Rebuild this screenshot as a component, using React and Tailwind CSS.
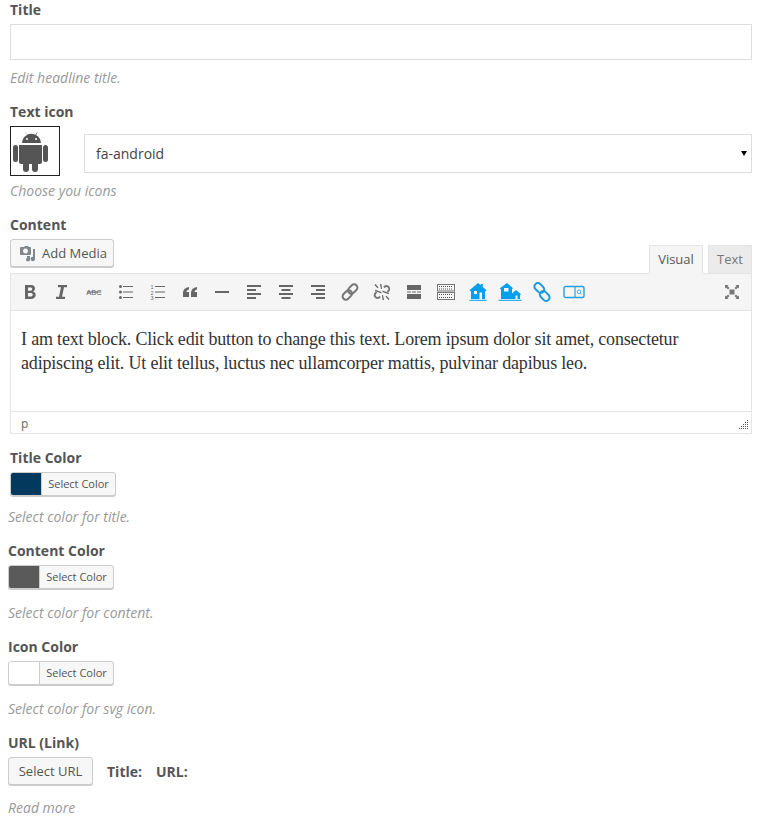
import React from 'react';

const Label = ({ children, className = '' }) => (
    <div className={`text-[14px] leading-[20px] font-bold text-[#555] ${className}`}>{children}</div>
);

const Help = ({ children, className = '' }) => (
    <div className={`text-[14px] leading-[20px] italic text-[#999] ${className}`}>{children}</div>
);

const ColorButton = ({ color }) => (
    <div className="flex w-[106px] h-[24px] rounded-[3px] border border-[#ccc] bg-[#f7f7f7] shadow-[0_1px_0_#ccc] overflow-hidden">
        <div className="w-[31px] h-full border-r border-[#ccc]" style={{ background: color }} />
        <div className="flex-1 text-center text-[11px] leading-[22px] text-[#555]">Select Color</div>
    </div>
);

const Ico = ({ children, color = '#666' }) => (
    <svg width="20" height="20" viewBox="0 0 20 20" fill={color} stroke="none">{children}</svg>
);

const toolbarIcons = [
    <Ico key="b"><path fillRule="evenodd" d="M5 3h6c2.400 0 4 1.200 4 3.400 0 1.400-.7 2.500-2 3 1.700.4 2.700 1.700 2.700 3.400 0 2.600-1.900 4.200-4.700 4.200H5zM8 5.500v3.200h2.500c1.100 0 1.700-.6 1.700-1.600S11.600 5.500 10.500 5.500zM8 11v3.500h2.800c1.200 0 1.900-.7 1.900-1.800S12 11 10.800 11z" /></Ico>,
    <Ico key="i"><path d="M6 3h9v2.200h-3L10 14.800h3V17H4v-2.200h3L9 5.200H6z" /></Ico>,
    <Ico key="abc"><rect x="3" y="9.500" width="14" height="1" /><text x="10" y="13" textAnchor="middle" fontSize="7.500" fontFamily="Liberation Sans, sans-serif" fill="#666">ABC</text></Ico>,
    <Ico key="ul"><circle cx="4.500" cy="4.500" r="1.500" /><circle cx="4.500" cy="10" r="1.500" /><circle cx="4.500" cy="15.500" r="1.500" /><rect x="7" y="4" width="10" height="1" /><rect x="7" y="9.500" width="10" height="1" /><rect x="7" y="15" width="10" height="1" /></Ico>,
    <Ico key="ol"><text x="2.500" y="7" fontSize="5.500" fontFamily="Liberation Sans, sans-serif" fill="#666">1</text><text x="2.500" y="12.500" fontSize="5.500" fontFamily="Liberation Sans, sans-serif" fill="#666">2</text><text x="2.500" y="18" fontSize="5.500" fontFamily="Liberation Sans, sans-serif" fill="#666">3</text><rect x="7" y="4" width="10" height="1" /><rect x="7" y="9.500" width="10" height="1" /><rect x="7" y="15" width="10" height="1" /></Ico>,
    <Ico key="q"><path d="M9 5v2.200C7.300 8 6.500 9 6.400 10H9v5H3v-4.500C3 8 5 5.800 9 5zM17 5v2.200C15.300 8 14.500 9 14.400 10H17v5h-6v-4.500C11 8 13 5.800 17 5z" /></Ico>,
    <Ico key="hr"><rect x="3" y="9" width="14" height="2" /></Ico>,
    <Ico key="al"><rect x="3" y="3" width="14" height="2" /><rect x="3" y="7" width="9" height="2" /><rect x="3" y="11" width="14" height="2" /><rect x="3" y="15" width="9" height="2" /></Ico>,
    <Ico key="ac"><rect x="3" y="3" width="14" height="2" /><rect x="5.500" y="7" width="9" height="2" /><rect x="3" y="11" width="14" height="2" /><rect x="5.500" y="15" width="9" height="2" /></Ico>,
    <Ico key="ar"><rect x="3" y="3" width="14" height="2" /><rect x="8" y="7" width="9" height="2" /><rect x="3" y="11" width="14" height="2" /><rect x="8" y="15" width="9" height="2" /></Ico>,
    <Ico key="link"><g fill="none" stroke="#777" strokeWidth="2"><rect x="9.500" y="1.800" width="6.500" height="10.500" rx="3.250" transform="rotate(45 12.750 7)" /><rect x="4" y="7.700" width="6.500" height="10.500" rx="3.250" transform="rotate(45 7.250 13)" /></g></Ico>,
    <Ico key="unlink"><g fill="none" stroke="#777" strokeWidth="2"><path d="M12 5.500l1-1.200a3 3 0 0 1 4 4l-1.500 1.700" /><path d="M8 14.500l-1 1.200a3 3 0 0 1-4-4l1.500-1.700" /></g><path d="M3.500 2l3 3.500-1 .8-3-3.300zM16.500 18l-3-3.500 1-.8 3 3.300zM8 2h1.500l.5 5H9zM12 18h-1.500l-.5-5h1zM10.500 8.500L17 11l-.4 1.200-6-2.300zM9.500 11.500L3 9l.4-1.200 6 2.300z" /></Ico>,
    <Ico key="more"><rect x="3" y="3" width="14" height="5" /><rect x="3" y="12" width="14" height="5" /><rect x="3" y="9.500" width="4" height="1" /><rect x="8" y="9.500" width="4" height="1" /><rect x="13" y="9.500" width="4" height="1" /></Ico>,
    <svg key="kitchen" width="20" height="18" viewBox="0 0 20 18"><g fill="none" stroke="#777"><rect x="1.500" y="1.500" width="17" height="6.500" /><rect x="1.500" y="9.500" width="17" height="7" /></g><path d="M3 3.500h14M3 6h14M3 11.500h14M3 14.500h14" stroke="#555" strokeWidth="1" strokeDasharray="1 1" fill="none" /></svg>,
    <svg key="home" width="20" height="20" viewBox="0 0 20 20" fill="#00a0ee"><path fillRule="evenodd" d="M10 1l2.800 2.300V2h2v3l3.700 3.200-.8 1-.7-.5V17H3V8.700l-.7.500-.8-1zM6 9v3h3V9zM11.500 10.500V17h2.500v-6.500z" /><rect x="1.500" y="17.800" width="17" height="1" /></svg>,
    <svg key="home2" width="24" height="20" viewBox="0 0 24 20" fill="#00a0ee"><path fillRule="evenodd" d="M9 1l6 5.200-.8.800-.2-.2V11.500L18 8l5 4.200-.7.800-.3-.2V17H3V6.800l-.7.400-.7-.8zM6 6v3.500h4.500V6zM17.500 13.500V17h2v-3.500z" /><rect x="0.500" y="17.800" width="23" height="1" /></svg>,
    <Ico key="link2"><g fill="none" stroke="#1a9be0" strokeWidth="2"><rect x="1.800" y="2.500" width="11" height="7" rx="3.500" transform="rotate(45 7.300 6)" /><rect x="7.200" y="10.500" width="11" height="7" rx="3.500" transform="rotate(45 12.700 14)" /></g></Ico>,
    <svg key="box" width="22" height="14" viewBox="0 0 22 14"><g fill="none" stroke="#2a9fe0"><rect x="1" y="1.500" width="20" height="11" rx="1.500" strokeWidth="1.400" /><path d="M12 1.500v11" strokeWidth="1.200" /><circle cx="16" cy="6.800" r="1.800" strokeWidth=".8" /><path d="M17.300 8.200l1.200 1.200" strokeWidth=".8" /></g></svg>,
];

const App = () => {
    return (
        <div className="w-[765px] h-[829px] overflow-hidden bg-white font-['Open_Sans',sans-serif]">
            <div className="pl-[10px] w-[752px]">
                <Label>Title</Label>
                <input className="block mt-[4px] w-full h-[36px] border border-[#ddd] bg-white" />
                <Help className="mt-[8px]">Edit headline title.</Help>

                <Label className="mt-[14px]">Text icon</Label>
                <div className="flex items-start mt-[4px]">
                    <div className="w-[50px] h-[50px] border border-[#222] shrink-0">
                        <svg width="48" height="48" viewBox="0 0 48 48" fill="#555">
                            <path d="M11 16c.3-4 2.300-6.500 5-8l-1.600-2.500.5-.3L15.700 7.700c2.800-1.200 6-1.200 8.600 0l1.800-2.500.5.3L25 8c2.700 1.500 4.700 4 5 8z" />
                            <circle cx="16" cy="12" r="1" fill="#fff" />
                            <circle cx="25" cy="12" r="1" fill="#fff" />
                            <path d="M8 18h23v17a2 2 0 0 1-2 2H10a2 2 0 0 1-2-2z" />
                            <rect x="2" y="18" width="5" height="17" rx="2.500" />
                            <rect x="32" y="18" width="5" height="17" rx="2.500" />
                            <rect x="12" y="34" width="6" height="11" rx="3" />
                            <rect x="21" y="34" width="6" height="11" rx="3" />
                        </svg>
                    </div>
                    <div className="relative mt-[8px] ml-[24px] flex-1">
                        <select className="block appearance-none w-full h-[39px] border border-[#ddd] bg-white pl-[11px] text-[14px] text-[#444]">
                            <option>fa-android</option>
                        </select>
                        <div className="absolute right-[5px] top-[17px] w-0 h-0 border-x-[3.500px] border-x-transparent border-t-[5px] border-t-black" />
                    </div>
                </div>
                <Help className="mt-[5px]">Choose you icons</Help>

                <Label className="mt-[14px]">Content</Label>
                <div className="flex items-end justify-between mt-[4px] h-[34px]">
                    <div className="self-start flex items-center gap-[6px] w-[104px] h-[28px] pl-[7px] pt-px rounded-[3px] border border-[#ccc] bg-[#f7f7f7] shadow-[0_1px_0_#ccc] text-[13px] text-[#555]">
                        <svg width="18" height="18" viewBox="0 0 18 18" fill="#82878c">
                            <path fillRule="evenodd" d="M3 2h3l1-1h3l1 1h1a1 1 0 0 1 1 1v6a1 1 0 0 1-1 1H3a1 1 0 0 1-1-1V3a1 1 0 0 1 1-1zM7.500 3.500a2.500 2.500 0 1 0 .01 0z" />
                            <path d="M15 4h2v10a2.200 2.200 0 1 1-2-2.200zM9 11h3v3.500A2 2 0 1 1 10 12.500h-1z" />
                        </svg>
                        Add Media
                    </div>
                    <div className="flex gap-[5px] -mb-px">
                        <div className="w-[54px] h-[29px] text-center text-[13px] leading-[26px] text-[#555] border border-[#e5e5e5] border-b-[#f5f5f5] bg-[#f5f5f5]">Visual</div>
                        <div className="w-[44px] h-[29px] text-center text-[13px] leading-[26px] text-[#777] border border-[#e5e5e5] bg-[#ebebeb]">Text</div>
                    </div>
                </div>

                <div className="border border-[#e5e5e5]">
                    <div className="flex items-center h-[37px] pl-[3px] pr-[9px] bg-[#f5f5f5] border-b border-[#e5e5e5]">
                        {toolbarIcons.map((icon, i) => (
                            <div key={i} className="w-[32px] h-[24px] flex items-center justify-center shrink-0">{icon}</div>
                        ))}
                        <div className="ml-auto">
                            <Ico color="#777"><path d="M3 3h3.500L5.500 4 7.500 6 6 7.500 4 5.500 3 6.500zM17 3v3.500L16 5.500 14 7.500 12.500 6l2-2L13.500 3zM3 17v-3.500L4 14.500l2-2L7.500 14l-2 2 1 1zM17 17h-3.500l1-1-2-2 1.500-1.500 2 2 1-1zM7.500 7.500h5v5h-5z" /></Ico>
                        </div>
                    </div>
                    <div className="h-[101px] px-[10px] pt-[16px] border-b border-[#e5e5e5] font-['Liberation_Serif',serif] text-[18px] tracking-[-0.18px] leading-[24px] text-[#333]">
                        I am text block. Click edit button to change this text. Lorem ipsum dolor sit amet, consectetur adipiscing elit. Ut elit tellus, luctus nec ullamcorper mattis, pulvinar dapibus leo.
                    </div>
                    <div className="relative h-[21px] pl-[10px] text-[12px] leading-[24px] text-[#666]">
                        p
                        <svg className="absolute right-[2px] bottom-[3px]" width="10" height="10" viewBox="0 0 10 10" fill="#5a5a6a">
                            <rect x="8" y="0" width="1" height="1" /><rect x="6" y="2" width="1" height="1" /><rect x="8" y="2" width="1" height="1" /><rect x="4" y="4" width="1" height="1" /><rect x="6" y="4" width="1" height="1" /><rect x="8" y="4" width="1" height="1" /><rect x="2" y="6" width="1" height="1" /><rect x="4" y="6" width="1" height="1" /><rect x="6" y="6" width="1" height="1" /><rect x="8" y="6" width="1" height="1" /><rect x="0" y="8" width="1" height="1" /><rect x="2" y="8" width="1" height="1" /><rect x="4" y="8" width="1" height="1" /><rect x="6" y="8" width="1" height="1" /><rect x="8" y="8" width="1" height="1" />
                        </svg>
                    </div>
                </div>

                <Label className="mt-[14px]">Title Color</Label>
                <div className="mt-[4px]"><ColorButton color="#04395e" /></div>
            </div>

            <div className="pl-[8px]">
                <Help className="mt-[11px]">Select color for title.</Help>

                <Label className="mt-[14px]">Content Color</Label>
                <div className="mt-[4px]"><ColorButton color="#5a5a5a" /></div>
                <Help className="mt-[14px]">Select color for content.</Help>

                <Label className="mt-[14px]">Icon Color</Label>
                <div className="mt-[4px]"><ColorButton color="#ffffff" /></div>
                <Help className="mt-[14px]">Select color for svg icon.</Help>

                <Label className="mt-[14px]">URL (Link)</Label>
                <div className="flex items-center mt-[4px]">
                    <div className="w-[85px] h-[28px] text-center text-[13px] leading-[26px] text-[#555] rounded-[3px] border border-[#ccc] bg-[#f7f7f7] shadow-[0_1px_0_#ccc]">Select URL</div>
                    <div className="ml-[14px] text-[14px] font-bold text-[#555]">Title:</div>
                    <div className="ml-[14px] text-[14px] font-bold text-[#555]">URL:</div>
                </div>
                <Help className="mt-[13px]">Read more</Help>
            </div>
        </div>
    );
};

export default App;
